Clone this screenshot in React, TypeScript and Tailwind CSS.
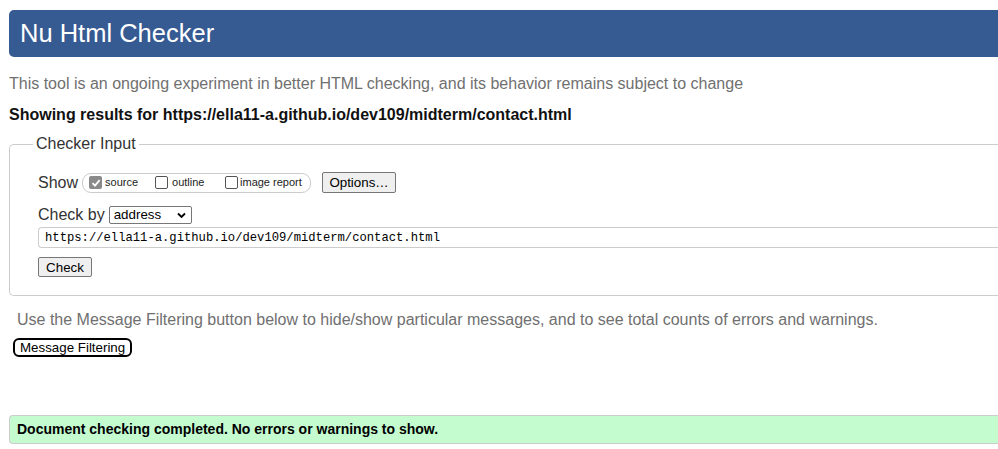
import React from 'react'

const Box = ({ checked }: { checked?: boolean }) =>
  checked ? (
    <span className="inline-flex h-[13px] w-[13px] items-center justify-center rounded-[2px] bg-[#8a8a8a]">
      <svg width="10" height="10" viewBox="0 0 10 10">
        <path d="M1.5 5.2 L4 7.6 L8.6 2.2" fill="none" stroke="#fff" strokeWidth="1.8" />
      </svg>
    </span>
  ) : (
    <span className="inline-block h-[13px] w-[13px] rounded-[2px] border border-[#555] bg-white" />
  )

export default function App() {
  return (
    <div className="w-full overflow-hidden bg-white font-['Liberation_Sans',Arial,sans-serif] text-[#222]">
      <div className="w-[1020px] pl-[9px] pt-[10px] pb-[5px]">
        {/* Header */}
        <div className="flex h-[47px] items-center rounded-l-[5px] bg-[#365a92] pl-[11px] text-[25.5px] text-white">
          Nu Html Checker
        </div>

        <p className="mt-[18px] text-[16px] leading-[18px] text-[#707070]">
          This tool is an ongoing experiment in better HTML checking, and its behavior remains subject to change
        </p>
        <p className="mt-[13px] text-[16px] font-bold leading-[18px] text-[#111]">
          Showing results for https://ella11-a.github.io/dev109/midterm/contact.html
        </p>

        {/* Checker Input */}
        <fieldset className="mt-[11px] rounded-l-[5px] border border-r-0 border-[#ccc] pb-[18px] pl-[23px]">
          <legend className="px-[3px] text-[16px] leading-[18px] text-[#333]">Checker Input</legend>
          <div className="pl-[5px]">
            <div className="mt-[19px] flex h-[21px] items-center">
              <span className="text-[16px] leading-[18px] text-[#333]">Show</span>
              <div className="ml-[4px] flex h-[20px] w-[229px] items-center rounded-[9px] border border-[#ccc] pl-[6px] text-[11px] text-[#222]">
                <Box checked />
                <span className="ml-[3px] w-[50px]">source</span>
                <Box />
                <span className="ml-[4px] w-[53px]">outline</span>
                <Box />
                <span className="ml-[2px]">image report</span>
              </div>
              <button className="ml-[11px] h-[21px] w-[74px] rounded-[2px] border border-[#767676] bg-[#efefef] text-[13.33px] text-black">
                Options…
              </button>
            </div>

            <div className="mt-[13px] flex h-[18px] items-center">
              <span className="text-[16px] leading-[18px] text-[#333]">Check by</span>
              <div className="relative ml-[4px] h-[18px] w-[83px]">
                <select
                  defaultValue="address"
                  className="block h-[18px] w-full appearance-none rounded-[2px] border border-[#767676] bg-white py-0 pl-[4px] text-[13.33px] leading-[16px] text-black"
                >
                  <option value="address">address</option>
                </select>
                <svg
                  className="pointer-events-none absolute right-[6px] top-[6px]"
                  width="9"
                  height="7"
                  viewBox="0 0 9 7"
                >
                  <path d="M1 1.5 L4.5 5 L8 1.5" fill="none" stroke="#000" strokeWidth="1.8" />
                </svg>
              </div>
            </div>

            <input
              readOnly
              value="https://ella11-a.github.io/dev109/midterm/contact.html"
              className="mt-[3px] block h-[21px] w-full rounded-l-[4px] border border-r-0 border-[#ccc] bg-white pl-[6px] font-['Liberation_Mono','DejaVu_Sans_Mono',monospace] text-[12.2px] text-black outline-none"
            />

            <button className="mt-[9px] block h-[20px] w-[54px] rounded-[2px] border border-[#767676] bg-[#efefef] text-[13.33px] text-black">
              Check
            </button>
          </div>
        </fieldset>

        <p className="mt-[15px] pl-[8px] text-[16px] leading-[18px] text-[#707070]">
          Use the Message Filtering button below to hide/show particular messages, and to see total counts of errors and warnings.
        </p>
        <button className="ml-[4px] mt-[9px] block h-[19px] rounded-[6px] border-2 border-black bg-white px-[5px] text-[13.33px] leading-[14px] text-black">
          Message Filtering
        </button>

        <div className="mt-[58px] flex h-[29px] items-center rounded-l-[4px] border border-r-0 border-[#ccc] bg-[#c4fcd0] pl-[7px] text-[14px] font-bold text-black">
          Document checking completed. No errors or warnings to show.
        </div>
      </div>
    </div>
  )
}
